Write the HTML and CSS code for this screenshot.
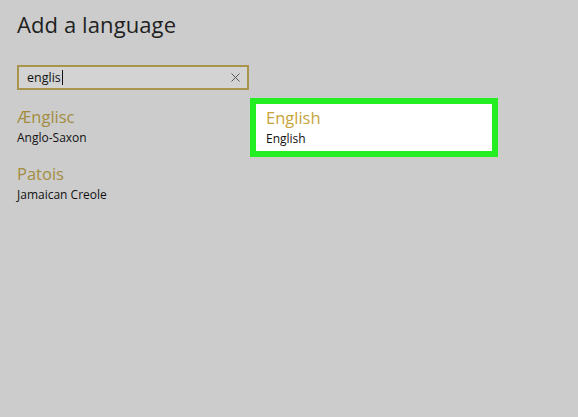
FILE: index.html
```html
<!DOCTYPE html>
<html>
<head>
<meta charset="utf-8">
<link rel="stylesheet" href="styles.css">
</head>
<body>
<div class="page">
  <h1 class="title">Add a language</h1>
  <div class="search">
    <span class="query">englis</span><span class="caret"></span>
    <span class="clear">
      <svg width="9" height="9" viewBox="0 0 9 9"><path d="M0.5 0.5L8.5 8.5M8.5 0.5L0.5 8.5" stroke="#555" stroke-width="1" fill="none"/></svg>
    </span>
  </div>
  <div class="results">
    <div class="col">
      <div class="item">
        <div class="name">Ænglisc</div>
        <div class="sub">Anglo-Saxon</div>
      </div>
      <div class="item">
        <div class="name">Patois</div>
        <div class="sub">Jamaican Creole</div>
      </div>
    </div>
    <div class="col">
      <div class="item selected">
        <div class="name">English</div>
        <div class="sub">English</div>
      </div>
    </div>
  </div>
</div>
</body>
</html>
```
FILE: styles.css
```css
html, body {
  margin: 0;
  padding: 0;
  background: #cccccc;
  width: 578px;
  height: 417px;
  overflow: hidden;
  font-family: "Open Sans", "Noto Sans", sans-serif;
}
.page {
  padding: 8px 0 0 17px;
}
.title {
  margin: 0;
  font-weight: 400;
  font-size: 22px;
  line-height: 32px;
  color: #1f1f1f;
  letter-spacing: 0.1px;
}
.search {
  margin-top: 25px;
  width: 220px;
  height: 21px;
  border: 2px solid #a8944a;
  background: #d3d3d3;
  display: flex;
  align-items: center;
  padding-left: 8px;
  box-sizing: content-box;
}
.query {
  font-size: 12.5px;
  color: #111;
}
.caret {
  width: 1px;
  height: 15px;
  background: #111;
  margin-left: 1px;
}
.clear {
  margin-left: auto;
  margin-right: 7px;
  display: flex;
}
.results {
  display: flex;
  margin-top: 7px;
}
.col {
  display: flex;
  flex-direction: column;
}
.col:first-child {
  width: 233px;
  padding-top: 10px;
  gap: 17px;
}
.item .name {
  font-size: 16.5px;
  line-height: 20px;
  color: #a38c3f;
}
.item .sub {
  margin-top: 2px;
  font-size: 12px;
  line-height: 18px;
  color: #111;
}
.selected {
  width: 226px;
  height: 43px;
  border: 6px solid #22ee22;
  background: #ffffff;
  padding: 4px 0 0 10px;
  box-sizing: content-box;
  margin-top: 1px;
}
.selected .name {
  color: #c7a43c;
}
```
